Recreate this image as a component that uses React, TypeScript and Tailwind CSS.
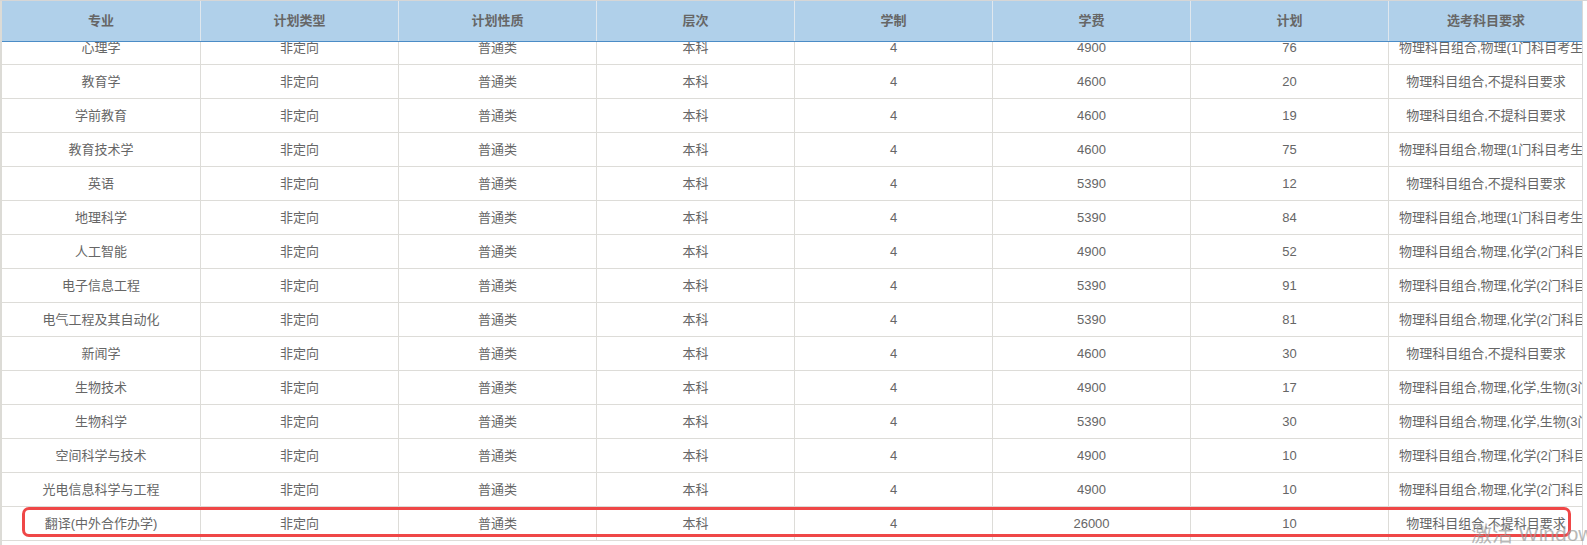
import React from "react";

const GRID = "grid grid-cols-[199px_198px_198px_198px_198px_198px_198px_194px]";

const headers = ["专业", "计划类型", "计划性质", "层次", "学制", "学费", "计划", "选考科目要求"];

const R1 = "物理科目组合,物理(1门科目考生必须选考方可报考)";
const RN = "物理科目组合,不提科目要求";
const RG = "物理科目组合,地理(1门科目考生必须选考方可报考)";
const R2 = "物理科目组合,物理,化学(2门科目考生均须选考方可报考)";
const R3 = "物理科目组合,物理,化学,生物(3门科目考生选考其中1门即可报考)";

const rows: [string, string, string, string][] = [
  ["心理学", "4900", "76", R1],
  ["教育学", "4600", "20", RN],
  ["学前教育", "4600", "19", RN],
  ["教育技术学", "4600", "75", R1],
  ["英语", "5390", "12", RN],
  ["地理科学", "5390", "84", RG],
  ["人工智能", "4900", "52", R2],
  ["电子信息工程", "5390", "91", R2],
  ["电气工程及其自动化", "5390", "81", R2],
  ["新闻学", "4600", "30", RN],
  ["生物技术", "4900", "17", R3],
  ["生物科学", "5390", "30", R3],
  ["空间科学与技术", "4900", "10", R2],
  ["光电信息科学与工程", "4900", "10", R2],
  ["翻译(中外合作办学)", "26000", "10", RN],
];

export default function App() {
  return (
    <div
      className="relative w-[1587px] h-[545px] overflow-hidden bg-white border-t border-[#d6d6d6]"
      style={{ fontFamily: '"Liberation Sans", "Noto Sans CJK SC", sans-serif' }}
    >
      <div className="w-[1583px] h-full border-l-2 border-[#dcdbd6] border-r border-r-[#d9d9d9]">
        <div className={`${GRID} h-[41px] bg-[#b0d0ea] border-b border-[#4b8cc6]`}>
          {headers.map((h) => (
            <div
              key={h}
              className="flex items-center justify-center border-r border-[#dfe7ee] text-[13px] font-bold text-[#666666] last:border-r-0"
            >
              {h}
            </div>
          ))}
        </div>
        <div className="h-[503px] overflow-hidden">
          <div className="-mt-[11px]">
            {rows.map(([name, fee, plan, req]) => {
              const cells = [name, "非定向", "普通类", "本科", "4", fee, plan, req];
              return (
                <div key={name} className={`${GRID} h-[34px] border-b border-[#dddcd8]`}>
                  {cells.map((c, i) => (
                    <div
                      key={i}
                      className="border-r border-[#dddcd8] px-[10px] text-center whitespace-nowrap overflow-hidden leading-[33px] text-[13px] text-[#666666] last:border-r-0"
                    >
                      {c}
                    </div>
                  ))}
                </div>
              );
            })}
          </div>
        </div>
      </div>

      <div className="absolute left-[22px] top-[506px] w-[1549px] h-[30px] border-[3px] border-[#ef4747] rounded-[7px] pointer-events-none" />

      <div className="absolute left-[1471px] top-[522px] text-[21px] leading-none text-[#9a9a9a]/70 whitespace-nowrap pointer-events-none">
        激活 Windows
      </div>
    </div>
  );
}
